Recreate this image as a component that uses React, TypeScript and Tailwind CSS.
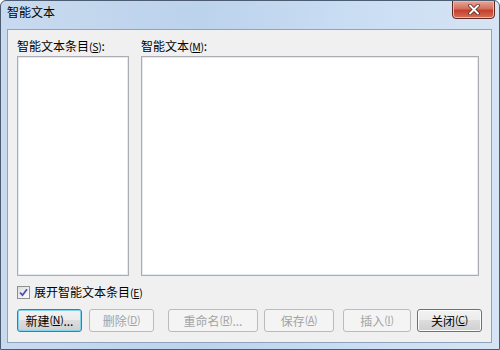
import React from 'react';

const font = { fontFamily: '"Noto Sans CJK SC", "Liberation Sans", sans-serif' };

function Key({ k }: { k: string }) {
  return (
    <span className="text-[10.5px] tracking-[-0.3px]">
      (<span className="underline">{k}</span>)
    </span>
  );
}

interface BtnProps {
  children: React.ReactNode;
  width: string;
  disabled?: boolean;
  isDefault?: boolean;
}

function Btn({ children, width, disabled, isDefault }: BtnProps) {
  const base = 'h-[23px] rounded-[3px] flex items-center justify-center text-[12px] leading-none shrink-0';
  if (disabled) {
    return (
      <div className={`${base} ${width} border border-[#b8bcbf] bg-[#f4f4f4] text-[#a3a3a3]`}>
        {children}
      </div>
    );
  }
  return (
    <div
      className={`${base} ${width} border ${
        isDefault ? 'border-[#3b7fa8] shadow-[inset_0_0_0_1px_#7fd3ec]' : 'border-[#707070] shadow-[inset_0_0_0_1px_#fcfcfc]'
      } bg-[linear-gradient(#f2f2f2_0%,#ebebeb_50%,#dddddd_50%,#cfcfcf_100%)] text-black`}
    >
      {children}
    </div>
  );
}

export default function App() {
  return (
    <div
      className="w-[500px] h-[350px] overflow-hidden flex flex-col border border-[#4c5d72] rounded-t-[6px] bg-[linear-gradient(90deg,#c8daef_0%,#bcd3ec_40%,#c9ddf3_70%,#d6e4f4_100%)]"
      style={font}
    >
      {/* title bar */}
      <div className="h-[28px] shrink-0 flex items-start relative">
        <div className="pl-[6px] pt-[5px] text-[12px] text-black leading-none">智能文本</div>
        <div className="absolute right-[4px] top-[-1px] w-[43px] h-[19px] rounded-b-[4px] border border-[#5e2a22] bg-[linear-gradient(#e8a797_0%,#d2705e_45%,#c4402c_55%,#d6705a_100%)] flex items-center justify-center shadow-[inset_0_0_0_1px_#f0b8a8]">
          <svg width="12" height="11" viewBox="0 0 12 11">
            <path d="M2 1.5 L10 9.5 M10 1.5 L2 9.5" stroke="#5a2018" strokeWidth="3.5" strokeLinecap="round" />
            <path d="M2 1.5 L10 9.5 M10 1.5 L2 9.5" stroke="#ffffff" strokeWidth="2" strokeLinecap="round" />
          </svg>
        </div>
      </div>

      <div className="flex-1 flex pl-[6px] pr-[7px] pb-[6px]">
        <div className="flex-1 bg-[#f0f0f0] border border-[#8fa3bb] flex flex-col pl-[9px] pt-[10px]">
          <div className="flex gap-[12px]">
            <div className="w-[112px] flex flex-col">
              <div className="h-[16px] text-[12px] leading-none text-black">
                智能文本条目<Key k="S" />:
              </div>
              <div className="h-[220px] bg-white border border-[#abadb3] shadow-[inset_0_0_0_1px_#e3e9ef]" />
            </div>
            <div className="w-[338px] flex flex-col">
              <div className="h-[16px] text-[12px] leading-none text-black">
                智能文本<Key k="M" />:
              </div>
              <div className="h-[220px] bg-white border border-[#abadb3] shadow-[inset_0_0_0_1px_#e3e9ef]" />
            </div>
          </div>

          <div className="mt-[10px] h-[13px] flex items-center gap-[4px]">
            <div className="w-[13px] h-[13px] border border-[#8e8f8f] bg-[linear-gradient(135deg,#dcdcdc,#ffffff)] flex items-center justify-center">
              <svg width="9" height="9" viewBox="0 0 9 9">
                <path d="M1 4.5 L3.5 7.2 L8 1.2" fill="none" stroke="#4a4fb4" strokeWidth="1.8" />
              </svg>
            </div>
            <div className="text-[12px] leading-none text-black">
              展开智能文本条目<Key k="E" />
            </div>
          </div>

          <div className="mt-[10px] flex">
            <Btn width="w-[65px]" isDefault>
              新建<Key k="N" />...
            </Btn>
            <div className="w-[7px]" />
            <Btn width="w-[65px]" disabled>
              删除<Key k="D" />
            </Btn>
            <div className="w-[14px]" />
            <Btn width="w-[90px]" disabled>
              重命名<Key k="R" />...
            </Btn>
            <div className="w-[6px]" />
            <Btn width="w-[70px]" disabled>
              保存<Key k="A" />
            </Btn>
            <div className="w-[9px]" />
            <Btn width="w-[68px]" disabled>
              插入<Key k="I" />
            </Btn>
            <div className="w-[6px]" />
            <Btn width="w-[65px]">
              关闭<Key k="C" />
            </Btn>
          </div>
        </div>
      </div>
    </div>
  );
}
